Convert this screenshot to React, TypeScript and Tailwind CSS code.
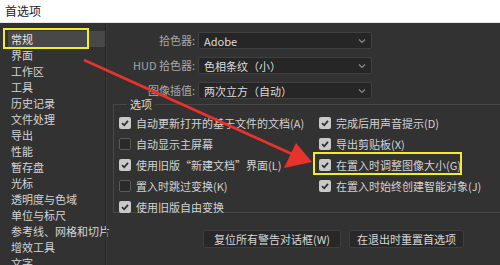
import React from "react";

const font = { fontFamily: '"Noto Sans CJK SC", "Liberation Sans", sans-serif' };

const sideItems = [
  "常规", "界面", "工作区", "工具", "历史记录", "文件处理", "导出", "性能", "暂存盘", "光标",
  "透明度与色域", "单位与标尺", "参考线、网格和切片", "增效工具", "文字",
];

function Check({ on }: { on: boolean }) {
  return on ? (
    <div className="w-[12px] h-[12px] rounded-[2px] bg-[#c9c9c9] flex items-center justify-center shrink-0">
      <svg width="10" height="10" viewBox="0 0 10 10">
        <path d="M2 5.2 L4.2 7.3 L8 2.8" fill="none" stroke="#2f2f2f" strokeWidth="1.8" />
      </svg>
    </div>
  ) : (
    <div className="w-[12px] h-[12px] rounded-[2px] border border-[#5a5a5a] bg-[#2a2a2a] shrink-0" />
  );
}

function Row({ on, text }: { on: boolean; text: string }) {
  return (
    <div className="h-[21px] flex items-center gap-[5px]">
      <Check on={on} />
      <span className="text-[11px] leading-[14px] text-[#d2d2d2] whitespace-nowrap">{text}</span>
    </div>
  );
}

function Select({ label, value }: { label: string; value: string }) {
  return (
    <div className="h-[25px] flex items-center">
      <div className="w-[89px] text-right text-[11px] text-[#a8a8a8] pr-[3px] whitespace-nowrap">{label}</div>
      <div className="w-[174px] h-[17px] bg-[#262626] border border-[#404040] rounded-[2px] flex items-center justify-between px-[5px]">
        <span className="text-[11px] leading-[14px] text-[#dcdcdc]">{value}</span>
        <svg width="8" height="6" viewBox="0 0 8 6">
          <path d="M1 1.5 L4 4.5 L7 1.5" fill="none" stroke="#8a8a8a" strokeWidth="1.2" />
        </svg>
      </div>
    </div>
  );
}

export default function App() {
  return (
    <div className="relative w-[500px] h-[265px] overflow-hidden bg-[#323232]" style={font}>
      <div className="h-[23px] bg-white flex items-center pl-[5px] border-b border-[#e8e8e8]">
        <span className="text-[12px] text-[#222]">首选项</span>
      </div>
      <div className="flex h-[242px] overflow-hidden">
        <div className="w-[106px] shrink-0 pl-[8px] pt-[8px] border-r border-[#262626]">
          {sideItems.map((t, i) => (
            <div
              key={t}
              className={`h-[16px] flex items-center pl-[3px] text-[11px] leading-[14px] whitespace-nowrap ${
                i === 0 ? "bg-[#484848] text-[#e6e6e6]" : "text-[#d4d4d4]"
              }`}
            >
              {t}
            </div>
          ))}
        </div>
        <div className="flex-1 flex flex-col pl-[2px] border-l border-[#3a3a3a]">
          <div className="pt-[5px] shrink-0">
            <Select label="拾色器:" value="Adobe" />
            <Select label="HUD 拾色器:" value="色相条纹（小）" />
            <Select label="图像插值:" value="两次立方（自动）" />
          </div>
          <div className="relative shrink-0 ml-[4px] mt-[1px] h-[109px] border border-[#474747] border-r-0 pl-[5px] pt-[7px] flex">
            <span className="absolute -top-[9px] left-[13px] px-[3px] bg-[#323232] text-[11px] leading-[16px] text-[#d8d8d8]">选项</span>
            <div className="w-[200px]">
              <Row on text="自动更新打开的基于文件的文档(A)" />
              <Row on={false} text="自动显示主屏幕" />
              <Row on text="使用旧版“新建文档”界面(L)" />
              <Row on={false} text="置入时跳过变换(K)" />
              <Row on text="使用旧版自由变换" />
            </div>
            <div>
              <Row on text="完成后用声音提示(D)" />
              <Row on text="导出剪贴板(X)" />
              <Row on text="在置入时调整图像大小(G)" />
              <Row on text="在置入时始终创建智能对象(J)" />
            </div>
          </div>
          <div className="flex shrink-0 gap-[8px] ml-[94px] mt-[17px]">
            <button className="w-[138px] h-[18px] bg-[#282828] border border-[#3e3e3e] rounded-[2px] text-[11px] leading-[14px] text-[#d8d8d8] flex items-center justify-center">
              复位所有警告对话框(W)
            </button>
            <button className="w-[115px] h-[18px] bg-[#282828] border border-[#3e3e3e] rounded-[2px] text-[11px] leading-[14px] text-[#d8d8d8] flex items-center justify-center">
              在退出时重置首选项
            </button>
          </div>
        </div>
      </div>
      <div className="absolute left-[3px] top-[28px] w-[86px] h-[21px] border-2 border-[#f2ec2a]" />
      <div className="absolute left-[313px] top-[152px] w-[149px] h-[23px] border-2 border-[#f2ec2a]" />
      <svg className="absolute left-0 top-0 pointer-events-none" width="500" height="265" viewBox="0 0 500 265">
        <line x1="84" y1="60" x2="292" y2="154" stroke="#e8322c" strokeWidth="3" />
        <polygon points="312,162 284,168 296,143" fill="#e8322c" />
      </svg>
    </div>
  );
}
